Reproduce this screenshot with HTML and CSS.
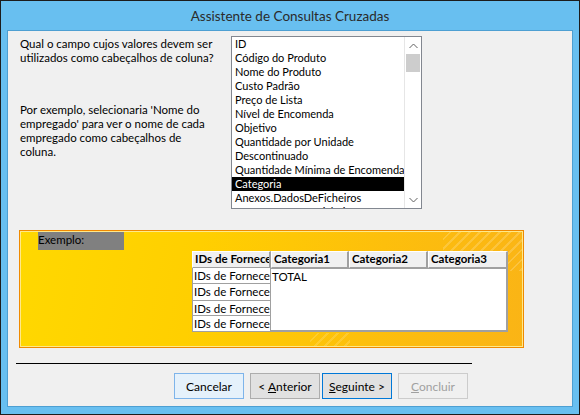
FILE: index.html
```html
<!DOCTYPE html>
<html lang="pt">
<head>
    <meta charset="UTF-8">
    <title>Assistente de Consultas Cruzadas</title>
    <link rel="stylesheet" href="styles.css">
</head>
<body>
    <div class="window">
        <div class="titlebar">Assistente de Consultas Cruzadas</div>
        <div class="client">
            <div class="top">
                <div class="prompt">
                    <p>Qual o campo cujos valores devem ser<br>utilizados como cabeçalhos de coluna?</p>
                    <p class="hint">Por exemplo, selecionaria 'Nome do<br>empregado' para ver o nome de cada<br>empregado como cabeçalhos de<br>coluna.</p>
                </div>
                <div class="listbox">
                    <ul class="items">
                        <li>ID</li>
                        <li>Código do Produto</li>
                        <li>Nome do Produto</li>
                        <li>Custo Padrão</li>
                        <li>Preço de Lista</li>
                        <li>Nível de Encomenda</li>
                        <li>Objetivo</li>
                        <li>Quantidade por Unidade</li>
                        <li>Descontinuado</li>
                        <li>Quantidade Mínima de Encomenda</li>
                        <li class="selected">Categoria</li>
                        <li>Anexos.DadosDeFicheiros</li>
                        <li>Anexos.NomeDoFicheiro</li>
                    </ul>
                    <div class="scrollbar">
                        <div class="arrow">
                            <svg width="9" height="6" viewBox="0 0 9 6"><path d="M0.5 5 L4.5 1 L8.5 5" fill="none" stroke="#606060" stroke-width="1"/></svg>
                        </div>
                        <div class="thumb"></div>
                        <div class="track"></div>
                        <div class="arrow">
                            <svg width="9" height="6" viewBox="0 0 9 6"><path d="M0.5 1 L4.5 5 L8.5 1" fill="none" stroke="#606060" stroke-width="1"/></svg>
                        </div>
                    </div>
                </div>
            </div>

            <div class="sample">
                <div class="sample-label">Exemplo:</div>
                <div class="grid">
                    <div class="head">IDs de Fornecedores</div>
                    <div class="head">Categoria1</div>
                    <div class="head">Categoria2</div>
                    <div class="head">Categoria3</div>
                    <div class="row-cell">IDs de Fornecedores</div>
                    <div class="data">TOTAL</div>
                    <div class="row-cell">IDs de Fornecedores</div>
                    <div class="row-cell">IDs de Fornecedores</div>
                    <div class="row-cell">IDs de Fornecedores</div>
                </div>
            </div>

            <div class="divider"></div>

            <div class="buttons">
                <button class="btn cancel">Cancelar</button>
                <button class="btn back">&lt; <u>A</u>nterior</button>
                <button class="btn next"><u>S</u>eguinte &gt;</button>
                <button class="btn finish" disabled><u>C</u>oncluir</button>
            </div>
        </div>
    </div>
</body>
</html>
```

FILE: styles.css
```css
* {
    margin: 0;
    padding: 0;
    box-sizing: border-box;
}

body {
    font-family: 'Lato', 'Liberation Sans', sans-serif;
    font-size: 11.5px;
    color: #000;
}

.window {
    width: 580px;
    height: 415px;
    background: #68bff0;
    border: 1px solid #1c1c1c;
    padding: 0 6px 7px 6px;
    display: flex;
    flex-direction: column;
}

.titlebar {
    height: 29px;
    line-height: 30px;
    text-align: center;
    font-size: 13.5px;
    color: #2b2b2b;
}

.client {
    flex: 1;
    background: #f0f0f0;
    border: 1px solid #4d9fd2;
    padding: 5px 0 0 0;
}

.top {
    display: flex;
    height: 175px;
}

.prompt {
    width: 223px;
    padding: 1px 0 0 12px;
    line-height: 14px;
}

.prompt .hint {
    margin-top: 38px;
}

.listbox {
    width: 191px;
    height: 173px;
    border: 1px solid #828790;
    background: #fff;
    display: flex;
    overflow: hidden;
}

.items {
    list-style: none;
    flex: 1;
    overflow: hidden;
    font-size: 11px;
}

.items li {
    height: 14px;
    line-height: 14px;
    padding-left: 3px;
    white-space: nowrap;
}

.items li.selected {
    background: #000;
    color: #fff;
}

.scrollbar {
    width: 17px;
    display: flex;
    flex-direction: column;
    border-left: 1px solid #e6e6e6;
}

.arrow {
    height: 17px;
    display: flex;
    align-items: center;
    justify-content: center;
}

.thumb {
    height: 18px;
    background: #cdcdcd;
    margin: 0 1px;
}

.track {
    flex: 1;
}

.sample {
    margin: 19px 0 0 11px;
    width: 505px;
    height: 118px;
    border: 1px solid #f08a00;
    box-shadow: inset 0 0 0 1px #ffe98a;
    background:
        repeating-linear-gradient(135deg, rgba(255, 255, 255, 0) 0 5px, rgba(255, 255, 255, 0.18) 5px 7px) right top / 80px 40px no-repeat,
        repeating-linear-gradient(135deg, rgba(255, 255, 255, 0) 0 5px, rgba(255, 255, 255, 0.15) 5px 7px) 290px bottom / 40px 14px no-repeat,
        linear-gradient(100deg, #ffd800 0%, #ffcf00 35%, #fdbf0c 70%, #fab416 100%);
    padding: 1px 0 0 18px;
}

.sample-label {
    width: 86px;
    height: 18px;
    line-height: 16px;
    background: #808080;
    color: #000;
}

.grid {
    margin: 1px 0 0 154px;
    display: grid;
    grid-template-columns: 79px 78px 79px 80px;
    grid-template-rows: 17px 16px 17px 15px 16px;
    width: 316px;
}

.head {
    background: #f0f0f0;
    border: 1px solid;
    border-color: #fff #a0a0a0 #a0a0a0 #fff;
    border-right-width: 2px;
    font-weight: bold;
    padding-left: 2px;
    line-height: 14px;
    white-space: nowrap;
    overflow: hidden;
}

.row-cell {
    background: #fff;
    border: 1px solid #a0a0a0;
    border-top: none;
    line-height: 15px;
    padding-left: 1px;
    white-space: nowrap;
    overflow: hidden;
    grid-column: 1;
}

.data {
    grid-column: 2 / 5;
    grid-row: 2 / 6;
    background: #fff;
    border-right: 2px solid #a0a0a0;
    border-bottom: 2px solid #a0a0a0;
    border-top: 1px solid #a0a0a0;
    padding-left: 1px;
    line-height: 15px;
}

.divider {
    margin: 15px 0 0 8px;
    width: 456px;
    height: 1px;
    background: #000;
}

.buttons {
    display: flex;
    margin: 9px 0 0 166px;
}

.btn {
    width: 70px;
    height: 26px;
    font-family: inherit;
    font-size: 12px;
    color: #000;
    background: #e1e1e1;
    border: 1px solid #adadad;
    margin-right: 6px;
}

.btn u {
    text-decoration: underline;
}

.btn.cancel {
    background: #e5f1fb;
    border-color: #7eb4ea;
}

.btn.back {
    margin-right: 2px;
}

.btn.next {
    border-color: #0078d7;
}

.btn.finish {
    background: #f0f0f0;
    border-color: #cccccc;
    color: #a0a0a0;
}
```
